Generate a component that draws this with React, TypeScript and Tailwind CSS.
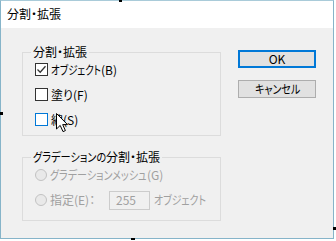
import React, { useLayoutEffect, useRef, useState } from "react";

const font = "font-['Meiryo_UI','Noto_Sans_CJK_JP',sans-serif] [font-feature-settings:'palt']";

// Narrow kana like Meiryo UI: squeeze the text horizontally to a target width.
function Fit({ w, target, children }: { w: string; target: number; children: React.ReactNode }) {
  const ref = useRef<HTMLSpanElement>(null);
  const [s, setS] = useState(1);
  useLayoutEffect(() => {
    if (ref.current && ref.current.offsetWidth > 0) setS(target / ref.current.offsetWidth);
  }, [target]);
  return (
    <span className={`inline-block whitespace-nowrap shrink-0 ${w}`}>
      <span ref={ref} className="inline-block origin-left" style={{ transform: `scaleX(${s})` }}>
        {children}
      </span>
    </span>
  );
}

function CheckBox({ checked, hover }: { checked?: boolean; hover?: boolean }) {
  return (
    <div
      className={`w-[13px] h-[13px] bg-white border ${hover ? "border-[#0078d7]" : "border-[#333333]"} flex items-center justify-center shrink-0`}
    >
      {checked && (
        <svg width="11" height="11" viewBox="0 0 11 11">
          <polyline points="1.5,5.5 4.2,8.2 9.5,2.2" fill="none" stroke="#333333" strokeWidth="1.3" />
        </svg>
      )}
    </div>
  );
}

function Radio() {
  return <div className="w-[12px] h-[12px] rounded-full border border-[#c2c2c2] bg-[#e9e9e9] shrink-0" />;
}

export default function App() {
  return (
    <div className={`relative w-[336px] h-[241px] bg-white overflow-hidden text-[12px] leading-[16px] text-black ${font}`}>
      <div className="w-[334px] h-[239px] border border-[#86b4c9] border-t-[#a9cbd9] flex flex-col">
        <div className="h-[27px] bg-white flex items-center pl-[6px] pb-[1px]">分割・拡張</div>
        <div className="flex-1 bg-[#f0f0f0] flex pl-[21px] pt-[16px]">
          <div className="flex flex-col gap-[13px]">
            <fieldset className="w-[199px] h-[92px] border border-[#dcdcdc]">
              <legend className="ml-[8px] px-[2px] leading-[16px]">分割・拡張</legend>
              <div className="flex flex-col gap-[12px] pt-[3px] pl-[12px]">
                <div className="flex items-center h-[13px]">
                  <CheckBox checked />
                  <span className="ml-[3px] flex items-center">
                    <Fit w="w-[50px]" target={50}>オブジェクト</Fit>
                    <span>(B)</span>
                  </span>
                </div>
                <div className="flex items-center h-[13px]">
                  <CheckBox />
                  <span className="ml-[3px]">塗り(F)</span>
                </div>
                <div className="flex items-center h-[13px]">
                  <CheckBox hover />
                  <span className="ml-[3px]">線(S)</span>
                </div>
              </div>
            </fieldset>
            <fieldset className="w-[199px] h-[72px] border border-[#dcdcdc]">
              <legend className="ml-[8px] px-[2px] leading-[16px]">
                <span className="flex items-center">
                  <Fit w="w-[73px]" target={73}>グラデーションの</Fit>
                  <span>分割・拡張</span>
                </span>
              </legend>
              <div className="flex flex-col gap-[9px] pt-[3px] pl-[12px] text-[#a0a0a0]">
                <div className="flex items-center h-[14px]">
                  <Radio />
                  <span className="ml-[3px] flex items-center">
                    <Fit w="w-[97px]" target={97}>グラデーションメッシュ</Fit>
                    <span>(G)</span>
                  </span>
                </div>
                <div className="flex items-center h-[18px]">
                  <Radio />
                  <span className="ml-[3px] w-[59px]">指定(E)：</span>
                  <div className="w-[41px] h-[19px] border border-[#cccccc] bg-[#f0f0f0] flex items-center pl-[6px] text-[#a0a0a0]">
                    255
                  </div>
                  <span className="ml-[4px] flex items-center">
                    <Fit w="w-[52px]" target={52}>オブジェクト</Fit>
                  </span>
                </div>
              </div>
            </fieldset>
          </div>
          <div className="ml-[17px] mt-[6px] flex flex-col gap-[12px]">
            <div className="w-[78px] h-[18px] border-2 border-[#0078d7] bg-[#e1e1e1] flex items-center justify-center">
              OK
            </div>
            <div className="w-[78px] h-[18px] border border-[#adadad] bg-[#e1e1e1] flex items-center justify-center">
              <Fit w="w-[45px]" target={45}>キャンセル</Fit>
            </div>
          </div>
        </div>
      </div>

      {/* mouse cursor */}
      <svg className="absolute left-[56px] top-[113px]" width="13" height="20" viewBox="0 0 13 20">
        <polygon
          points="0.5,0.5 0.5,16 4.2,12.4 7,18.6 9.4,17.6 6.7,11.6 11.5,11.6"
          fill="white"
          stroke="black"
          strokeWidth="1"
          strokeLinejoin="miter"
        />
      </svg>

      {/* background artwork marks */}
      <div className="absolute left-[119px] top-0 w-[3px] h-[2px] bg-black" />
      <div className="absolute left-0 top-[112px] w-[3px] h-[3px] bg-black" />
      <div className="absolute left-[131px] top-[238px] w-[4px] h-[2px] bg-black" />
      <div className="absolute left-[333px] top-[227px] w-[3px] h-[3px] bg-black" />
    </div>
  );
}
